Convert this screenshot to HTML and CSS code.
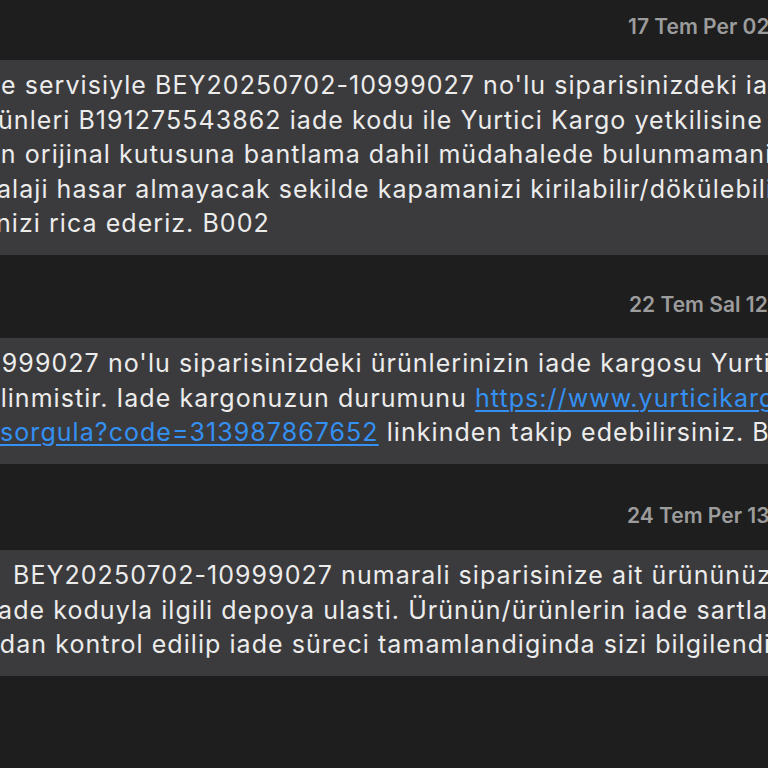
FILE: index.html
```html
<!DOCTYPE html>
<html lang="tr">
<head>
<meta charset="utf-8">
<title>Mesajlar</title>
<link rel="stylesheet" href="styles.css">
</head>
<body>
<main class="thread">
  <div class="stamp stamp-1">17 Tem Per 02:14</div>
  <div class="bubble bubble-1">
    <div class="line l1">e servisiyle BEY20250702-10999027 no'lu siparisinizdeki iade</div>
    <div class="line l2">ünleri B191275543862 iade kodu ile Yurtici Kargo yetkilisine</div>
    <div class="line l3">un orijinal kutusuna bantlama dahil müdahalede bulunmamanizi</div>
    <div class="line l4">alaji hasar almayacak sekilde kapamanizi kirilabilir/dökülebilir</div>
    <div class="line l5">nizi rica ederiz. B002</div>
  </div>
  <div class="stamp stamp-2">22 Tem Sal 12:30</div>
  <div class="bubble bubble-2">
    <div class="line m1">0999027 no'lu siparisinizdeki ürünlerinizin iade kargosu Yurtici</div>
    <div class="line m2">elinmistir. Iade kargonuzun durumunu <a class="link" href="#">https://www.yurticikargo.com</a></div>
    <div class="line m3"><a class="link" href="#">/sorgula?code=313987867652</a> linkinden takip edebilirsiniz. B002</div>
  </div>
  <div class="stamp stamp-3">24 Tem Per 13:05</div>
  <div class="bubble bubble-3">
    <div class="line n1">BEY20250702-10999027 numarali siparisinize ait ürününüz</div>
    <div class="line n2">iade koduyla ilgili depoya ulasti. Ürünün/ürünlerin iade sartlari</div>
    <div class="line n3">ndan kontrol edilip iade süreci tamamlandiginda sizi bilgilendirecegiz</div>
  </div>
</main>
</body>
</html>
```
FILE: styles.css
```css
html, body {
  margin: 0;
  padding: 0;
  background: #1e1e1e;
  overflow: hidden;
  width: 768px;
  height: 768px;
}
.thread {
  display: flex;
  flex-direction: column;
  font-family: Inter, "Noto Sans", sans-serif;
  width: 768px;
  overflow: hidden;
}
.stamp {
  white-space: nowrap;
  color: #9c9c9c;
  font-size: 21px;
  font-weight: 600;
  line-height: 24px;
  padding-left: 628px;
}
.stamp-1 { padding-top: 15px; padding-bottom: 21px; }
.stamp-2 { padding-top: 38px; padding-bottom: 21.5px; padding-left: 629px; }
.stamp-3 { padding-top: 40.5px; padding-bottom: 22px; padding-left: 627px; }
.bubble {
  background: #3b3b3d;
  color: #ececec;
  font-size: 25px;
  letter-spacing: 1.05px;
  line-height: 34.5px;
  padding: 8px 0 14px 0;
  white-space: nowrap;
  overflow: hidden;
}
.link { color: #3490f3; text-decoration: underline; text-underline-offset: 3px; text-decoration-thickness: 2px; }
.l1 { margin-left: 1px; }
.l2 { margin-left: -2px; }
.l3 { margin-left: -15px; }
.l4 { margin-left: -3px; }
.l5 { margin-left: -4px; }
.m1 { margin-left: -15px; }
.m2 { margin-left: -15px; }
.m3 { margin-left: -10px; }
.n1 { margin-left: 13px; }
.n2 { margin-left: -9px; }
.n3 { margin-left: -16px; }
```
